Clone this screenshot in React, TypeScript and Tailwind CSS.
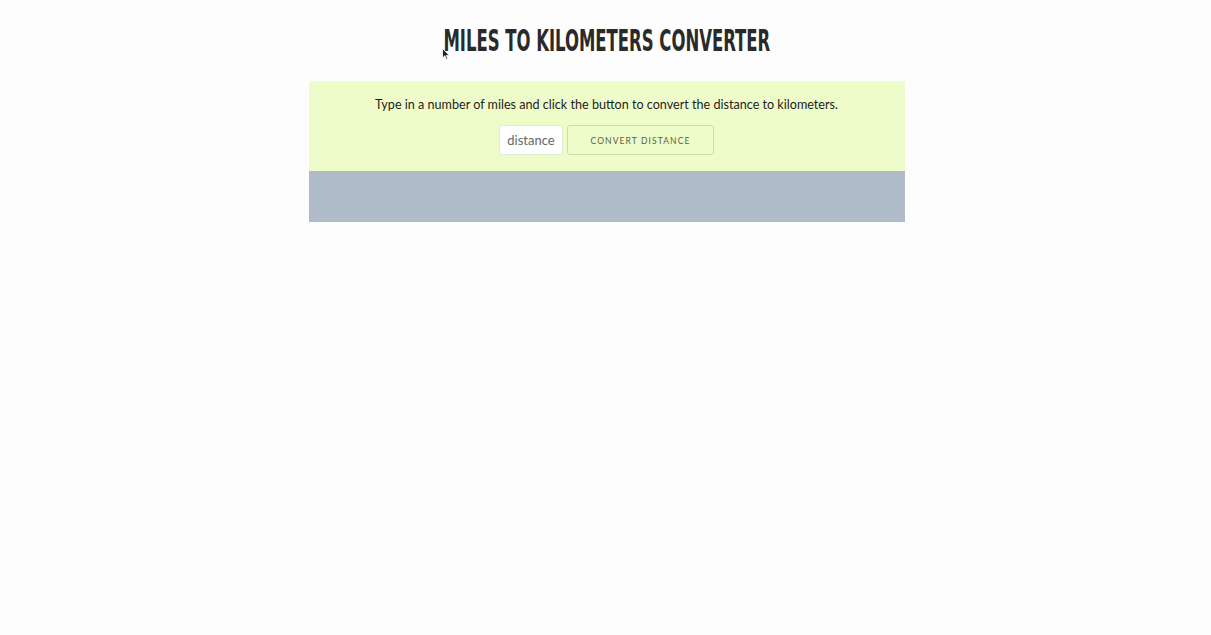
import React from "react";

export default function App() {
  return (
    <div className="min-h-[635px] w-full bg-[#fdfdfd] relative" style={{ fontFamily: "Lato, 'Open Sans', sans-serif" }}>
      <div className="flex flex-col items-center pt-[26px] pl-[2px]">
        <h1
          className="text-[30px] leading-[30px] text-[#2a2a2a] font-bold origin-center scale-x-[0.61] whitespace-nowrap"
          style={{ fontFamily: "'DejaVu Sans Condensed', 'DejaVu Sans', sans-serif" }}
        >
          MILES TO KILOMETERS CONVERTER
        </h1>
        <div className="mt-[25px] w-[596px] flex flex-col">
          <div className="bg-[#eefcc9] h-[90px] flex flex-col items-center pt-[16px]">
            <p className="text-[12.6px] leading-[16px] text-[#1e1e1e]">
              Type in a number of miles and click the button to convert the distance to kilometers.
            </p>
            <div className="mt-[12px] flex gap-[4px]">
              <input
                placeholder="distance"
                className="w-[64px] h-[30px] bg-white border border-[#e4ecd8] text-center text-[13px] placeholder:text-[#666] outline-none"
              />
              <button className="w-[147px] h-[30px] pt-[2px] border border-[#cddcaa] rounded-[3px] text-[8.5px] tracking-[1.1px] text-[#56623f] font-normal">
                CONVERT DISTANCE
              </button>
            </div>
          </div>
          <div className="bg-[#afbbc6] h-[51px]" />
        </div>
      </div>
      <svg className="absolute left-[442px] top-[48px]" width="8" height="13" viewBox="0 0 8 13">
        <path d="M0.5 0.5 L0.5 10 L2.8 7.8 L4.5 11.5 L5.8 11 L4.2 7.4 L7.2 7.4 Z" fill="#222" stroke="#fff" strokeWidth="0.8" />
      </svg>
    </div>
  );
}
